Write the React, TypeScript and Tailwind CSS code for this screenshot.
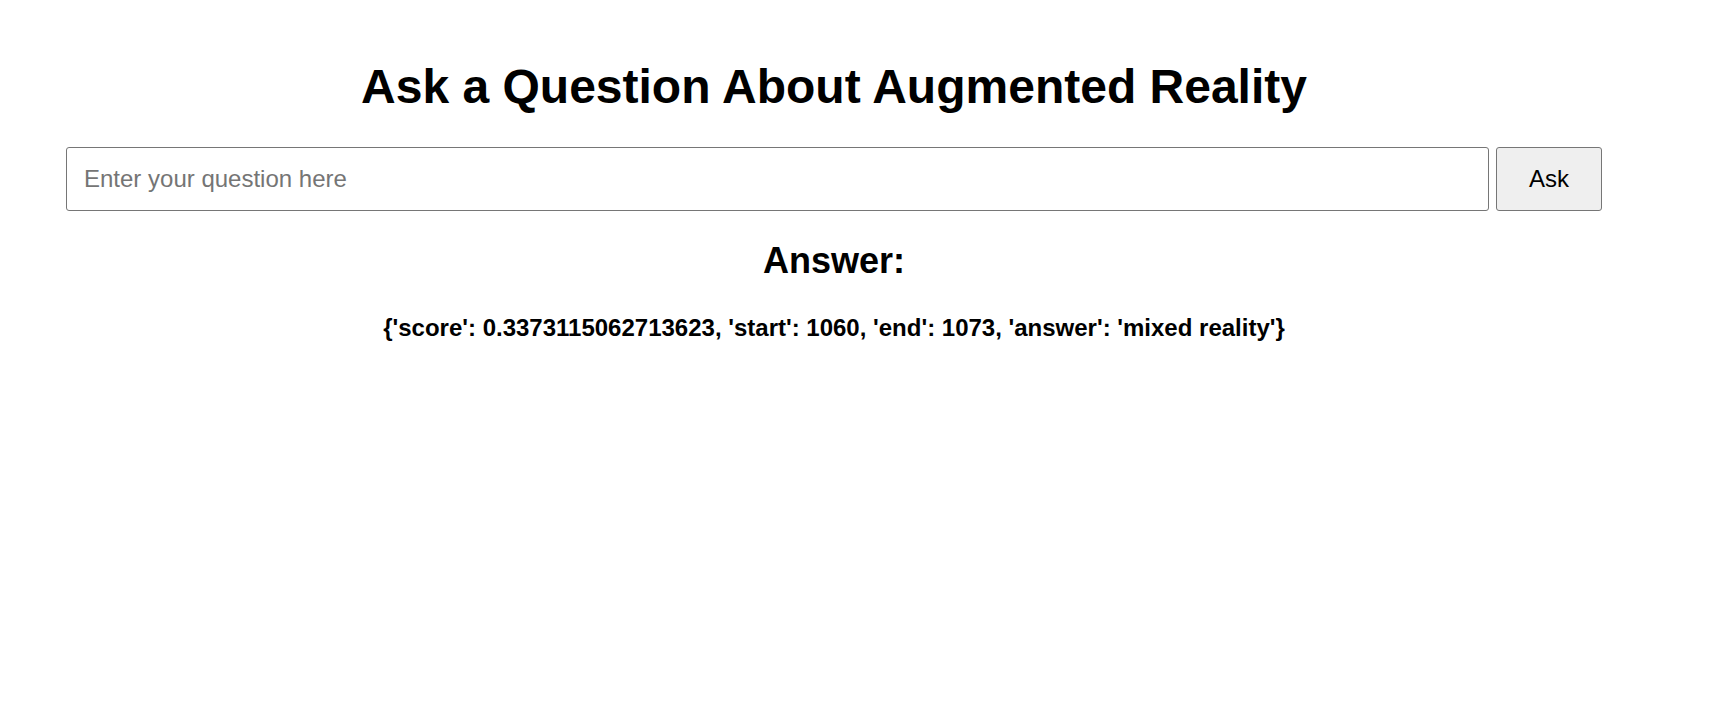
import { useState } from "react";

export default function App() {
  const [question, setQuestion] = useState("");

  return (
    <div className="min-h-screen bg-white font-['Liberation_Sans',Arial,sans-serif] text-black">
      <div className="ml-[66px] w-[1536px] pt-[60px] text-center">
        <h1 className="text-[48px] font-bold leading-[54px]">
          Ask a Question About Augmented Reality
        </h1>

        <div className="mt-[33px] flex gap-[7px]">
          <input
            type="text"
            value={question}
            onChange={(e) => setQuestion(e.target.value)}
            placeholder="Enter your question here"
            className="h-[64px] flex-1 rounded-[3px] border border-[#767676] bg-white px-[17px] text-[24px] text-black placeholder:text-[#757575] outline-none"
          />
          <button className="h-[64px] w-[106px] rounded-[3px] border border-[#767676] bg-[#efefef] text-[24px] text-black">
            Ask
          </button>
        </div>

        <h2 className="mt-[29px] text-[36px] font-bold leading-[41px]">Answer:</h2>
        <p className="mt-[33px] text-[24px] font-bold leading-[27px]">
          {"{'score': 0.3373115062713623, 'start': 1060, 'end': 1073, 'answer': 'mixed reality'}"}
        </p>
      </div>
    </div>
  );
}
